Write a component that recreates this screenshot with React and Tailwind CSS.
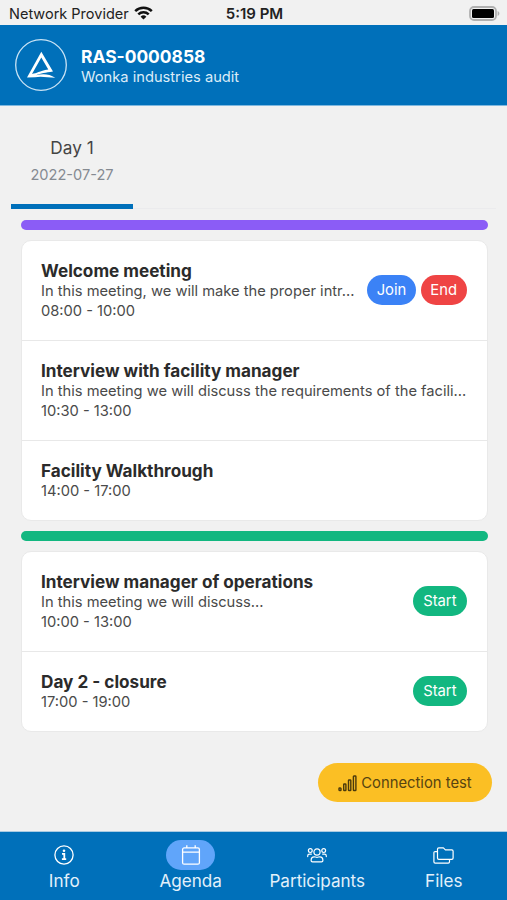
import clsx from 'clsx'

const groups = [
  {
    color: 'bg-[#8b5cf6]',
    meetings: [
      {
        title: 'Welcome meeting',
        description: 'In this meeting, we will make the proper intr...',
        time: '08:00 - 10:00',
        actions: ['Join', 'End'],
      },
      {
        title: 'Interview with facility manager',
        description: 'In this meeting we will discuss the requirements of the facili...',
        time: '10:30 - 13:00',
        actions: [],
      },
      { title: 'Facility Walkthrough', time: '14:00 - 17:00', actions: [] },
    ],
  },
  {
    color: 'bg-[#12b780]',
    meetings: [
      {
        title: 'Interview manager of operations',
        description: 'In this meeting we will discuss...',
        time: '10:00 - 13:00',
        actions: ['Start'],
      },
      { title: 'Day 2 - closure', time: '17:00 - 19:00', actions: ['Start'] },
    ],
  },
]

const actionStyles = {
  Join: 'bg-[#3b82f6] px-[9.5px]',
  End: 'bg-[#ef4444] px-[9.5px]',
  Start: 'bg-[#12b780] px-2.5',
}

function WifiIcon() {
  return (
    <svg className="mb-0.5" width="19" height="14" viewBox="0 0 19 14" fill="none" stroke="#111" strokeWidth="2.5">
      <path d="M1.2 5.2a12 12 0 0 1 16.6 0" />
      <path d="M4.3 8.4a7.5 7.5 0 0 1 10.4 0" />
      <path d="M9.5 13.6 6.6 10.7a4.2 4.2 0 0 1 5.8 0Z" fill="#111" stroke="none" />
    </svg>
  )
}

function BatteryIcon() {
  return (
    <svg width="31" height="15" viewBox="0 0 31 15" fill="none">
      <rect x="1" y="1" width="26" height="13" rx="4" stroke="#b0b0b0" strokeWidth="1.8" />
      <rect x="3" y="3" width="22" height="9" rx="1.5" fill="#000" />
      <path d="M28.6 5v5c1-.4 1.8-1.4 1.8-2.5S29.6 5.4 28.6 5Z" fill="#b0b0b0" />
    </svg>
  )
}

function Logo() {
  return (
    <svg width="52" height="52" viewBox="0 0 52 52" fill="none">
      <circle cx="26" cy="26" r="25.3" stroke="#c9e3f5" strokeWidth="1.3" />
      <path
        d="M26.3 12.7 38 32.6C30.500 33.800 26 34.200 21 36.300C28 34.300 34 34.800 40.300 38.700C32 38.400 26 36.800 20 38.300L12 38.500ZM26.300 18.600 17 34.900C22 34.600 24 32 33.300 30.600Z"
        fill="#fff"
        fillRule="evenodd"
      />
    </svg>
  )
}

function InfoIcon() {
  return (
    <svg width="20" height="20" viewBox="0 0 20 20" fill="none" stroke="#fff" strokeWidth="1.3">
      <circle cx="10" cy="10" r="9.1" />
      <circle cx="10" cy="5.8" r="1.3" fill="#fff" stroke="none" />
      <path d="M8 8.9h2.3V14M7.9 14.2h4.3" strokeWidth="1.8" />
    </svg>
  )
}

function CalendarIcon() {
  return (
    <svg width="20" height="20" viewBox="0 0 20 20" fill="none" stroke="#fff" strokeWidth="1.3">
      <rect x="1.6" y="2.9" width="16.8" height="16.3" rx="1.5" />
      <path d="M1.6 7.1h16.8M5.8 3V.3M14.2 3V.3" />
    </svg>
  )
}

function ParticipantsIcon() {
  return (
    <svg width="20" height="16" viewBox="0 0 20 16" fill="none" stroke="#fff" strokeWidth="1.2">
      <circle cx="10" cy="5" r="3.1" />
      <circle cx="3.3" cy="3.6" r="1.9" />
      <circle cx="16.7" cy="3.6" r="1.9" />
      <path d="M5.5 14.8c-.8 0-1.4-.6-1.4-1.4 0-2.3 1.4-3.6 3.2-3.6.9 0 1.5.5 2.7.5s1.8-.5 2.7-.5c1.8 0 3.2 1.3 3.2 3.6 0 .8-.6 1.4-1.4 1.4Z" />
      <path d="M.7 9.6v-.7c0-1.1.8-1.8 1.8-1.8h1.9M19.3 9.6v-.7c0-1.1-.8-1.8-1.8-1.8h-1.9" strokeLinecap="round" />
    </svg>
  )
}

function FilesIcon() {
  return (
    <svg width="21" height="17" viewBox="0 0 21 17" fill="none" stroke="#fff" strokeWidth="1.2" strokeLinejoin="round">
      <path d="M5.8.9h4.6l2 2h6.4c.8 0 1.3.5 1.3 1.3v6.8c0 .8-.5 1.3-1.3 1.3h-13c-.8 0-1.3-.5-1.3-1.3V2.2c0-.8.5-1.3 1.3-1.3Z" />
      <path d="M4.5 4.6H2.2C1.4 4.6.9 5.1.9 5.9v8.9c0 .8.5 1.3 1.3 1.3h13c.8 0 1.3-.5 1.3-1.3v-2.5" />
    </svg>
  )
}

function SignalIcon() {
  return (
    <svg width="19" height="17" viewBox="0 0 19 17" fill="none" stroke="#4b3a0c" strokeWidth="1.4">
      <rect x="1" y="13" width="2" height="2.5" rx=".6" />
      <rect x="5.7" y="9" width="2.2" height="6.5" rx=".6" />
      <rect x="10.5" y="5" width="2.3" height="10.5" rx=".6" />
      <rect x="15.4" y="1" width="2.5" height="14.5" rx=".6" />
    </svg>
  )
}

const navItems = [
  { label: 'Info', icon: <InfoIcon /> },
  { label: 'Agenda', icon: <CalendarIcon />, active: true },
  { label: 'Participants', icon: <ParticipantsIcon /> },
  { label: 'Files', icon: <FilesIcon /> },
]

function MeetingRow({ meeting }) {
  return (
    <div className="flex items-center gap-2 pt-[19px] pr-5 pb-5 pl-[19.5px]">
      <div className="min-w-0 flex-1 text-[14.68px] leading-5 whitespace-nowrap text-[#4a4a4a]">
        <h3 className="text-[17.15px] leading-[21px] font-bold text-[#2b2b2b]">{meeting.title}</h3>
        {meeting.description && <p>{meeting.description}</p>}
        <p className="-mb-px leading-5">{meeting.time}</p>
      </div>
      {meeting.actions.length > 0 && (
        <div className="flex gap-[5px]">
          {meeting.actions.map(action => (
            <button
              key={action}
              className={clsx('h-[30px] rounded-full pt-px text-[14.8px] text-white', actionStyles[action])}
            >
              {action}
            </button>
          ))}
        </div>
      )}
    </div>
  )
}

export default function App() {
  return (
    <div className="flex h-[900px] w-[507px] flex-col overflow-hidden bg-[#f1f1f1] font-['Inter',sans-serif]">
      {/* Status bar */}
      <div className="grid h-[25px] shrink-0 grid-cols-3 items-center pt-[3px] pr-[7px] pl-[9px] text-[14.5px] text-[#222]">
        <div className="flex items-center gap-[5px] whitespace-nowrap">
          Network Provider <WifiIcon />
        </div>
        <span className="text-center text-[15px] font-semibold">5:19 PM</span>
        <div className="flex justify-end pb-0.5"><BatteryIcon /></div>
      </div>

      {/* Header */}
      <header className="flex h-[81px] shrink-0 items-center gap-3.5 border-b border-[#7fb8df] bg-[#0070ba] px-[15px]">
        <Logo />
        <div className="pt-[3px] text-white">
          <h1 className="text-[17.4px] leading-5 font-bold">RAS-0000858</h1>
          <p className="text-[14.7px] leading-5 text-[#dcecf8]">Wonka industries audit</p>
        </div>
      </header>

      {/* Day tabs */}
      <div className="mx-[11px] flex h-[103px] shrink-0 border-b border-[#ebebed]">
        <div className="-mb-px flex w-[122px] flex-col items-center border-b-[5px] border-[#0070ba] pt-[30px]">
          <span className="text-[17.2px] leading-6 text-[#444]">Day 1</span>
          <span className="mt-[3px] text-[14.6px] leading-6 text-[#858a91]">2022-07-27</span>
        </div>
      </div>

      {/* Agenda */}
      <main className="flex flex-1 flex-col gap-2.5 pt-[11px] pr-[19.5px] pl-[20.5px]">
        {groups.map(group => (
          <section key={group.color} className="flex flex-col gap-2.5">
            <div className={clsx('h-2.5 rounded-full', group.color)} />
            <div className="divide-y divide-[#e8e8e8] rounded-[10px] border border-[#e9e9e9] bg-white">
              {group.meetings.map(meeting => (
                <MeetingRow key={meeting.title} meeting={meeting} />
              ))}
            </div>
          </section>
        ))}
        <button className="mt-[21px] -mr-[4.5px] flex h-[39px] w-[174px] items-center justify-center gap-1 self-end rounded-full bg-[#fbbf24] pt-0.5 text-[14.8px] text-[#574411]">
          <SignalIcon />
          Connection test
        </button>
      </main>

      {/* Bottom navigation */}
      <nav className="grid h-[69px] shrink-0 grid-cols-4 border-t border-[#a9cbe2] bg-[#0070ba] pt-2 pl-px">
        {navItems.map(item => (
          <div key={item.label} className="flex flex-col items-center text-[17.1px] leading-[22px] text-[#e3f0fa]">
            <div className={clsx('flex h-[30px] w-[49px] items-center justify-center rounded-full', item.active && 'bg-[#60a5fa]')}>
              {item.icon}
            </div>
            {item.label}
          </div>
        ))}
      </nav>
    </div>
  )
}
